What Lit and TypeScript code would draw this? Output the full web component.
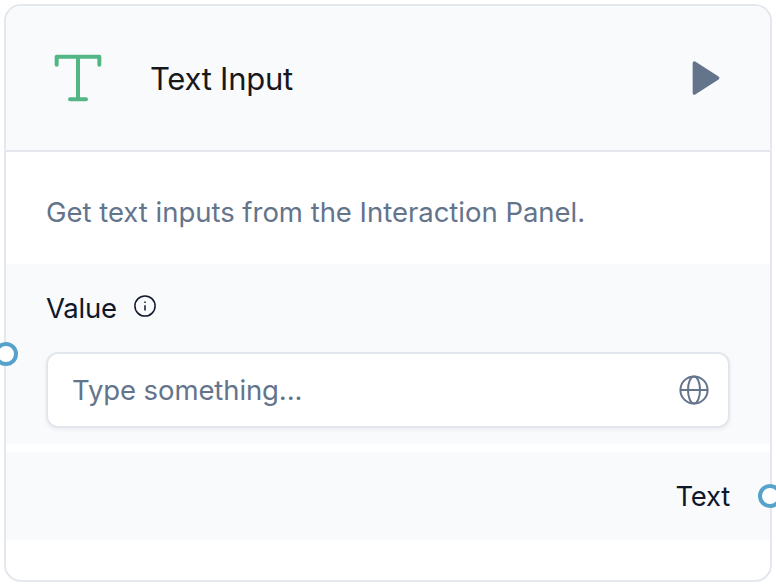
import { LitElement, html, css } from "lit";
import { customElement } from "lit/decorators.js";

@customElement("app-root")
export class AppRoot extends LitElement {
  static styles = css`
    :host {
      display: block;
      box-sizing: border-box;
      width: 776px;
      height: 586px;
      padding: 4px;
      overflow: hidden;
      background: #fff;
      font-family: Inter, "Liberation Sans", sans-serif;
      font-weight: 370;
      color: #0f172a;
    }
    * { box-sizing: border-box; }
    svg { display: block; flex: none; }
    .card {
      position: relative;
      width: 768px;
      height: 578px;
      border: 2px solid #e4e7ed;
      border-radius: 17px;
      background: #fff;
    }
    .header {
      display: flex;
      align-items: center;
      height: 146px;
      padding: 0 44px 0 40px;
      border-bottom: 2px solid #e4e7ed;
      border-radius: 15px 15px 0 0;
      background: #f8fafc;
    }
    .type { color: #53b785; }
    .title {
      flex: 1;
      margin-left: 40px;
      padding-top: 2px;
      font-size: 31px;
      line-height: 48px;
      letter-spacing: -0.25px;
      color: #18181b;
      white-space: nowrap;
    }
    .play { color: #64748b; }
    .description {
      height: 112px;
      padding: 40px 40px 0;
      font-size: 27.5px;
      line-height: 40px;
      letter-spacing: -0.02px;
      white-space: nowrap;
      color: #64748b;
    }
    .row { position: relative; background: #f8fafc; }
    .value { height: 180px; padding: 24px 40px 0; }
    .label {
      display: flex;
      height: 40px;
      font-size: 27.5px;
      line-height: 40px;
      letter-spacing: -0.25px;
    }
    .info { margin: 5px 0 0 15px; }
    .field {
      display: flex;
      align-items: center;
      justify-content: space-between;
      width: 684px;
      height: 76px;
      margin-top: 24px;
      padding: 0 18px 0 24px;
      border: 2px solid #e2e6ed;
      border-radius: 12px;
      background: #fff;
      box-shadow: 0 2px 4px rgba(0, 0, 0, 0.05);
      font-size: 27.5px;
      line-height: 40px;
      letter-spacing: -0.1px;
      color: #64748b;
    }
    .output {
      height: 88px;
      margin-top: 8px;
      padding: 24px 40px 0;
      text-align: right;
      font-size: 27.5px;
      line-height: 40px;
      letter-spacing: -0.25px;
    }
    .port {
      position: absolute;
      width: 24px;
      height: 24px;
      border: 4px solid #56a2ca;
      border-radius: 50%;
      background: #fff;
    }
    .port.in { left: -12px; top: 78px; }
    .port.out { right: -12px; top: 32px; }
  `;

  render() {
    return html`
      <section class="card">
        <header class="header">
          <svg class="type" width="64" height="64" viewBox="0 0 24 24" fill="none" stroke="currentColor"
            stroke-width="1.5" stroke-linecap="round" stroke-linejoin="round">
            <path d="M4 7V4h16v3M9 20h6M12 4v16" />
          </svg>
          <div class="title">Text Input</div>
          <svg class="play" width="40" height="40" viewBox="0 0 24 24" fill="currentColor" stroke="currentColor"
            stroke-width="2" stroke-linecap="round" stroke-linejoin="round">
            <path d="M5 3l14 9-14 9V3z" />
          </svg>
        </header>
        <div class="description">Get text inputs from the Interaction Panel.</div>
        <div class="row value">
          <div class="label">
            <span>Value</span>
            <svg class="info" width="26" height="26" viewBox="0 0 26 26" fill="none" stroke="currentColor" stroke-width="1.5">
              <circle cx="13" cy="13" r="10.1" />
              <path d="M13 12.2v5.2M13 8.5v1.6" />
            </svg>
          </div>
          <div class="field">
            <span>Type something...</span>
            <svg width="32" height="32" viewBox="0 0 32 32" fill="none" stroke="currentColor" stroke-width="2">
              <circle cx="16" cy="16" r="13.6" />
              <ellipse cx="16" cy="16" rx="6" ry="13.6" />
              <path d="M2.4 16h27.2" />
            </svg>
          </div>
          <i class="port in"></i>
        </div>
        <div class="row output">
          <span>Text</span>
          <i class="port out"></i>
        </div>
      </section>
    `;
  }
}
